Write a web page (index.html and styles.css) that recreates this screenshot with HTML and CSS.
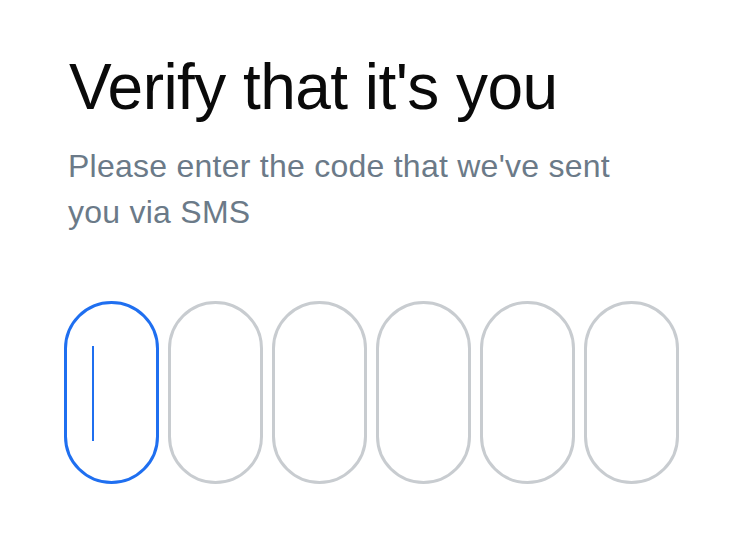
FILE: index.html
```html
<!DOCTYPE html>
<html lang="en">
<head>
<meta charset="utf-8">
<title>Verify that it's you</title>
<link rel="stylesheet" href="styles.css">
</head>
<body>
<main class="verify">
  <header class="verify-head">
    <h1 class="verify-title">Verify that it's you</h1>
    <p class="verify-sub">Please enter the code that we've sent you via SMS</p>
  </header>
  <div class="code-row">
    <div class="code-cell is-active"><span class="caret"></span></div>
    <div class="code-cell"></div>
    <div class="code-cell"></div>
    <div class="code-cell"></div>
    <div class="code-cell"></div>
    <div class="code-cell"></div>
  </div>
</main>
</body>
</html>
```

FILE: styles.css
```css
html, body {
  margin: 0;
  padding: 0;
  background: #ffffff;
}

body {
  font-family: "Liberation Sans", Arial, sans-serif;
}

.verify {
  padding: 51px 64px 0 64px;
}

.verify-head {
  padding-left: 4px;
}

.verify-title {
  margin: 0;
  padding-left: 1px;
  font-size: 64px;
  line-height: 72px;
  font-weight: 400;
  color: #0a0a0a;
  letter-spacing: -0.55px;
}

.verify-sub {
  margin: 20px 0 0 0;
  width: 570px;
  font-size: 32px;
  line-height: 46px;
  font-weight: 400;
  color: #6b7a88;
  letter-spacing: 0.25px;
}

.code-row {
  display: grid;
  grid-template-columns: repeat(6, 95px);
  gap: 9px;
  margin-top: 66px;
}

.code-cell {
  box-sizing: border-box;
  height: 183px;
  border: 3px solid #c8ccd0;
  border-radius: 999px;
  display: flex;
  align-items: center;
  padding-left: 25px;
}

.code-cell.is-active {
  border-color: #1f6ff0;
}

.caret {
  display: block;
  width: 2px;
  height: 95px;
  margin-top: 2px;
  background: #1f6ff0;
}
```
